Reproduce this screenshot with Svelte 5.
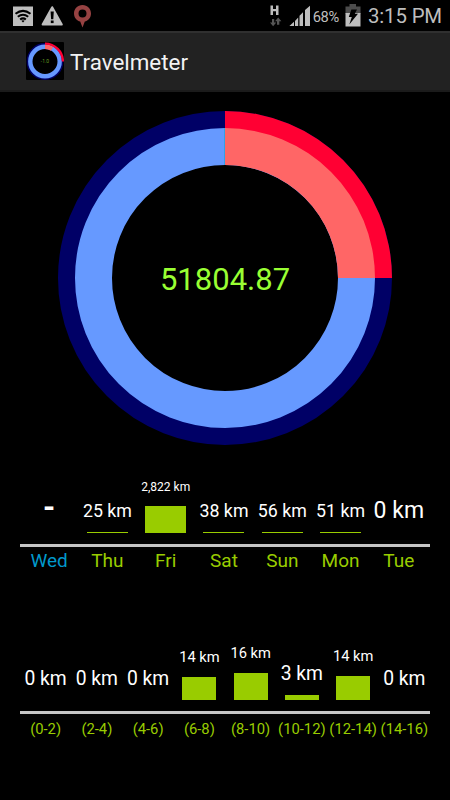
<script>
    const total = '51804.87';

    const days = [
        { label: 'Wed', value: '-', size: 31, bar: 0, today: true },
        { label: 'Thu', value: '25 km', size: 17.8, bar: 1 },
        { label: 'Fri', value: '2,822 km', size: 12, bar: 27 },
        { label: 'Sat', value: '38 km', size: 17.8, bar: 1 },
        { label: 'Sun', value: '56 km', size: 17.8, bar: 1 },
        { label: 'Mon', value: '51 km', size: 17.8, bar: 1 },
        { label: 'Tue', value: '0 km', size: 23, bar: 0 }
    ];

    const hours = [
        { label: '(0-2)', value: '0 km', size: 19.3, bar: 0 },
        { label: '(2-4)', value: '0 km', size: 19.3, bar: 0 },
        { label: '(4-6)', value: '0 km', size: 19.3, bar: 0 },
        { label: '(6-8)', value: '14 km', size: 14.7, bar: 23 },
        { label: '(8-10)', value: '16 km', size: 14.7, bar: 27 },
        { label: '(10-12)', value: '3 km', size: 19.3, bar: 5 },
        { label: '(12-14)', value: '14 km', size: 14.7, bar: 24 },
        { label: '(14-16)', value: '0 km', size: 19.3, bar: 0 }
    ];
</script>

<svelte:head>
    <title>Travelmeter</title>
</svelte:head>

{#snippet chart(items, name)}
    <section class="chart {name}">
        <div class="bars">
            {#each items as item}
                <div class="column">
                    <span class="value" class:empty={item.value === '-'} style="font-size: {item.size}px">{item.value}</span>
                    <div class="bar" style="height: {item.bar}px"></div>
                </div>
            {/each}
        </div>
        <div class="labels">
            {#each items as item}
                <span class:today={item.today}>{item.label}</span>
            {/each}
        </div>
    </section>
{/snippet}

<main>
    <div class="status">
        <svg class="notifications" width="82" height="31" viewBox="0 0 82 31">
            <!-- wifi -->
            <rect x="3" y="6.5" width="20" height="19.5" fill="#bebebe" />
            <g fill="none" stroke="#000" stroke-width="2">
                <path d="M5.500 13.800Q13 8 20.500 13.800" />
                <path d="M7.800 16.800Q13 12.600 18.200 16.800" />
                <path d="M10.100 19.600Q13 17.200 15.900 19.600" />
            </g>
            <path d="M11.300 20.800Q13 19.600 14.700 20.800L13 22.500Z" fill="#000" />
            <!-- warning -->
            <path d="M42.200 7.200L51.800 24.600H32.600Z" fill="#bebebe" stroke="#bebebe" stroke-width="2" stroke-linejoin="round" />
            <path d="M40.600 11.500H43.800L43.300 19.200H41.100Z" fill="#000" />
            <rect x="40.800" y="20.500" width="2.800" height="2.600" fill="#000" />
            <!-- pin -->
            <path d="M72.500 5C67.500 5 64 8.800 64 13.500C64 17.600 66.800 20.800 70.200 21.600L72.500 27.500L74.800 21.600C78.200 20.800 81 17.600 81 13.500C81 8.800 77.500 5 72.500 5ZM72.500 9.500A4 4 0 1 1 72.500 17.500A4 4 0 1 1 72.500 9.500Z" fill="#964242" />
        </svg>
        <div class="system">
            <svg width="44" height="31" viewBox="0 0 44 31">
                <!-- mobile data -->
                <path d="M1.500 5.500H4V9H7V5.500H9.500V15H7V11.200H4V15H1.500Z" fill="#bebebe" />
                <path d="M3 19H5.200V22.600H7.300L4.100 26.300L1 22.600H3ZM8 24.800V21.200H6L9.200 17.500L12.400 21.200H10.300V24.800Z" fill="#555" />
                <!-- signal -->
                <path d="M20.400 26L25 21.800V26ZM26 20.900L29.200 17.500V26H26ZM30.500 15.800L34 12.300V26H30.500ZM36 10L41 5.800V26H36Z" fill="#bebebe" />
            </svg>
            <span class="percent">68%</span>
            <svg class="battery" width="16" height="31" viewBox="0 0 16 31">
                <path d="M4.500 4H11V6.500H15.500V14H.500V6.500H4.500Z" fill="#4c4c4c" />
                <rect x=".5" y="13" width="15" height="13.500" fill="#bebebe" />
                <path d="M6.400 9.500H12L9.800 13.800H13L4.300 24.500L6.800 17H3.800Z" fill="#000" />
            </svg>
            <span class="clock">3:15 PM</span>
        </div>
    </div>

    <header>
        <svg class="logo" width="38" height="38" viewBox="0 0 38 38">
            <rect width="38" height="38" rx="1" fill="#000" />
            <circle cx="19" cy="19.500" r="17.300" fill="none" stroke="#000066" stroke-width="2.200" />
            <circle cx="19" cy="19.500" r="14.700" fill="none" stroke="#6699ff" stroke-width="4.400" />
            <path d="M19 1.600A17.900 17.900 0 0 1 36.900 19.500" fill="none" stroke="#ff0033" stroke-width="2.400" />
            <path d="M19 4.900A14.600 14.600 0 0 1 26 6.800" fill="none" stroke="#ff6666" stroke-width="4.300" />
            <text x="19" y="21" text-anchor="middle">-1.0</text>
        </svg>
        <h1>Travelmeter</h1>
    </header>

    <svg class="ring" width="334" height="334" viewBox="-167 -167 334 334">
        <circle r="158" fill="none" stroke="#000066" stroke-width="18" />
        <circle r="131.500" fill="none" stroke="#6699ff" stroke-width="37" />
        <path d="M0 -167A167 167 0 0 1 167 0H149A149 149 0 0 0 0 -149Z" fill="#ff0033" />
        <path d="M0 -150A150 150 0 0 1 150 0H113A113 113 0 0 0 0 -113Z" fill="#ff6666" />
        <path d="M-.5 -150V-113" stroke="#33a0e8" />
        <text y="12" text-anchor="middle">{total}</text>
    </svg>

    {@render chart(days, 'days')}
    {@render chart(hours, 'hours')}
</main>

<style>
    :global(body) {
        background: #000;
    }
    main {
        width: 450px;
        height: 800px;
        overflow: hidden;
        background: #000;
        font-family: Roboto, sans-serif;
        display: flex;
        flex-direction: column;
    }
    svg {
        display: block;
    }
    .status {
        height: 31px;
        flex: none;
        display: flex;
        justify-content: space-between;
        padding: 0 8px 0 10px;
        color: #bebebe;
    }
    .system {
        display: flex;
        align-items: flex-start;
    }
    .percent {
        font-size: 14.7px;
        line-height: 34px;
        letter-spacing: -0.3px;
    }
    .battery {
        margin: 0 7px 0 6px;
    }
    .clock {
        font-size: 20.4px;
        line-height: 32px;
        letter-spacing: -0.15px;
    }
    header {
        height: 61px;
        flex: none;
        box-sizing: border-box;
        display: flex;
        align-items: center;
        gap: 7px;
        padding-left: 26px;
        background: #222;
        border-top: 2px solid #303030;
        border-bottom: 2px solid #1b1b1b;
    }
    .logo {
        margin-bottom: 1px;
    }
    .logo text {
        font-size: 5px;
        fill: #669c22;
    }
    h1 {
        margin: 1px 0 0 -1px;
        font-size: 22.4px;
        font-weight: 400;
        color: #f3f3f3;
    }
    .ring {
        flex: none;
        margin: 19px auto 0;
    }
    .ring text {
        font-size: 31px;
        fill: #99ff33;
    }
    .chart {
        margin: 0 20px;
        flex: none;
    }
    .days {
        height: 168px;
    }
    .bars {
        height: 88px;
        padding-bottom: 11px;
        display: flex;
        align-items: flex-end;
        border-bottom: 3px solid #c5c5c5;
    }
    .days .bars,
    .days .labels {
        padding-right: 2px;
    }
    .hours .bars {
        height: 87px;
    }
    .column {
        flex: 1 1 0;
        display: flex;
        flex-direction: column;
        align-items: center;
    }
    .value {
        color: #fff;
        line-height: 1;
        white-space: nowrap;
        /* keeps every baseline 15px above its bar */
        padding-bottom: calc(15px - 0.158em);
    }
    .value.empty {
        font-weight: 700;
    }
    .bar {
        width: 41px;
        background: #99cc00;
    }
    .hours .bar {
        width: 34px;
    }
    .labels {
        display: flex;
        color: #99cc00;
        font-size: 19px;
        line-height: 27px;
    }
    .labels span {
        flex: 1 1 0;
        text-align: center;
        white-space: nowrap;
    }
    .labels .today {
        color: #0099cc;
    }
    .hours .labels {
        font-size: 14.8px;
        line-height: 30px;
    }
</style>
